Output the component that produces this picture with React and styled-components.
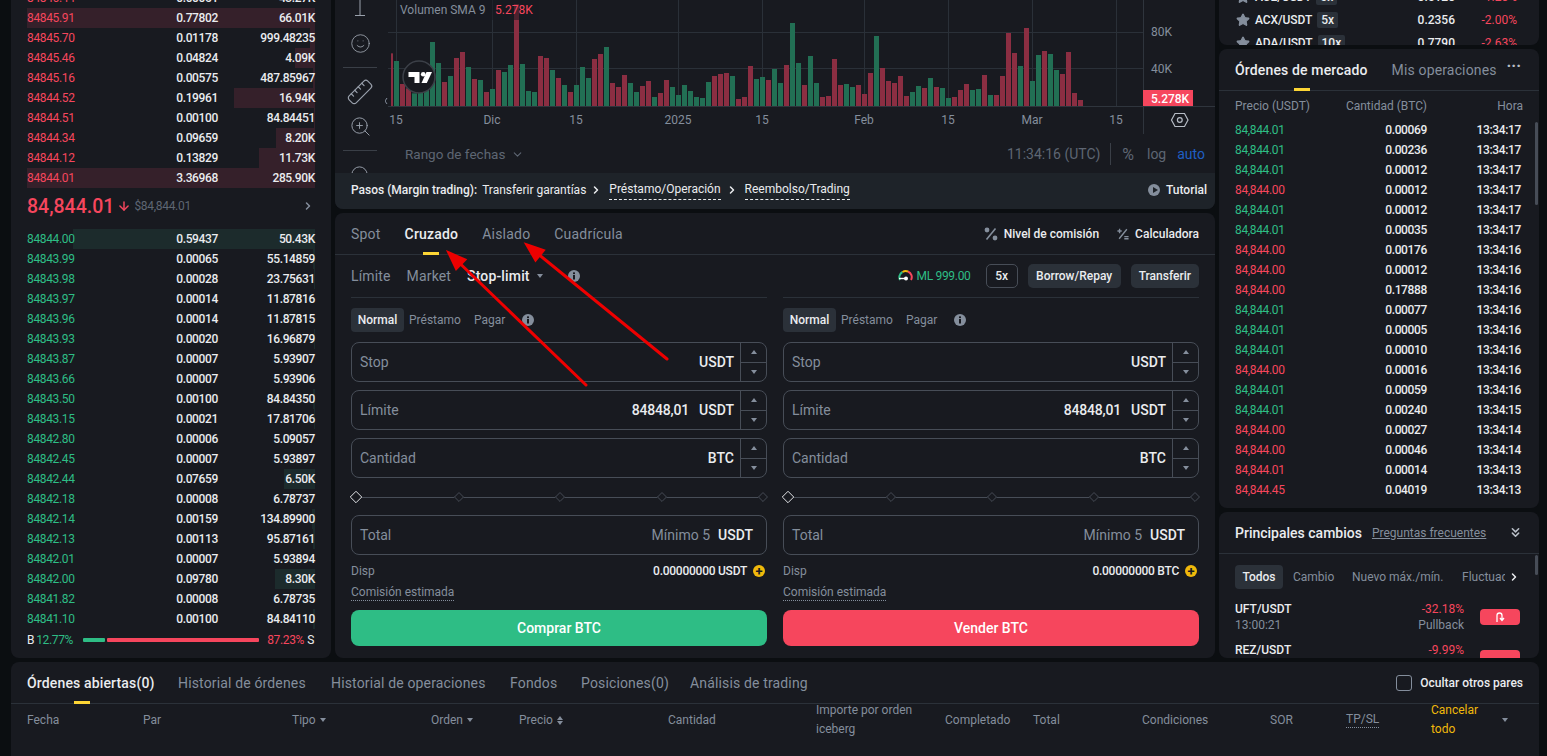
import React from 'react';
import styled, { createGlobalStyle } from 'styled-components';
import { Smile, Ruler, ZoomIn, ZoomOut, ChevronDown, ChevronRight, ChevronsDown, Star, ArrowDown } from 'lucide-react';

const GREEN = '#2ebd85';
const RED = '#f6465d';
const GRAY = '#848e9c';
const WHITE = '#eaecef';
const LINE = '#2b3139';
const PANEL = '#181a20';

const ASKS = [
  ['84846.44', '0.00051', '43.27K', 0],
  ['84845.91', '0.77802', '66.01K', 288],
  ['84845.70', '0.01178', '999.48235', 5],
  ['84845.46', '0.04824', '4.09K', 20],
  ['84845.16', '0.00575', '487.85967', 2],
  ['84844.52', '0.19961', '16.94K', 81],
  ['84844.51', '0.00100', '84.84451', 1],
  ['84844.34', '0.09659', '8.20K', 39],
  ['84844.12', '0.13829', '11.73K', 56],
  ['84844.01', '3.36968', '285.90K', 288],
];

const BIDS = [
  ['84844.00', '0.59437', '50.43K', 242],
  ['84843.99', '0.00065', '55.14859', 2],
  ['84843.98', '0.00028', '23.75631', 1],
  ['84843.97', '0.00014', '11.87816', 0],
  ['84843.96', '0.00014', '11.87815', 0],
  ['84843.93', '0.00020', '16.96879', 1],
  ['84843.87', '0.00007', '5.93907', 0],
  ['84843.66', '0.00007', '5.93906', 0],
  ['84843.50', '0.00100', '84.84350', 2],
  ['84843.15', '0.00021', '17.81706', 1],
  ['84842.80', '0.00006', '5.09057', 0],
  ['84842.45', '0.00007', '5.93897', 0],
  ['84842.44', '0.07659', '6.50K', 31],
  ['84842.18', '0.00008', '6.78737', 0],
  ['84842.14', '0.00159', '134.89900', 3],
  ['84842.13', '0.00113', '95.87161', 2],
  ['84842.01', '0.00007', '5.93894', 0],
  ['84842.00', '0.09780', '8.30K', 40],
  ['84841.82', '0.00008', '6.78735', 0],
  ['84841.10', '0.00100', '84.84110', 2],
];

const TRADES = [
  ['84,844.01', '0.00069', '13:34:17', 'g'],
  ['84,844.01', '0.00236', '13:34:17', 'g'],
  ['84,844.01', '0.00012', '13:34:17', 'g'],
  ['84,844.00', '0.00012', '13:34:17', 'r'],
  ['84,844.01', '0.00012', '13:34:17', 'g'],
  ['84,844.01', '0.00035', '13:34:17', 'g'],
  ['84,844.00', '0.00176', '13:34:16', 'r'],
  ['84,844.00', '0.00012', '13:34:16', 'r'],
  ['84,844.00', '0.17888', '13:34:16', 'r'],
  ['84,844.01', '0.00077', '13:34:16', 'g'],
  ['84,844.01', '0.00005', '13:34:16', 'g'],
  ['84,844.01', '0.00010', '13:34:16', 'g'],
  ['84,844.00', '0.00016', '13:34:16', 'r'],
  ['84,844.01', '0.00059', '13:34:16', 'g'],
  ['84,844.01', '0.00240', '13:34:15', 'g'],
  ['84,844.00', '0.00027', '13:34:14', 'r'],
  ['84,844.00', '0.00046', '13:34:14', 'r'],
  ['84,844.01', '0.00014', '13:34:13', 'r'],
  ['84,844.45', '0.04019', '13:34:13', 'r'],
];

// colour + top of the bar, measured at 3x from a baseline of 318
const BARS = 'r160 g183 r252 r265 g280 g270 g250 g126 g189 r246 g228 r174 r156 g201 r237 g240 r276 g267 r210 g216 g195 r12 g192 g273 g276 r168 r174 g210 r234 g255 r276 g255 g201 g234 r177 r162 g141 r249 r261 r225 g249 g276 r258 r243 g291 r279 r240 g261 g285 g255 g273 g291 g294 g246 r228 r222 r219 g228 r297 r291 r198 g237 g231 r240 g207 g249 r195 g69 g189 r255 g168 g249 r291 r288 r177 r255 g252 g261 r255 r282 r219 g108 r204 r243 r249 r228 r288 g276 g258 r264 g234 r261 g264 g294 r291 r270 r252 g270 g267 r225 g285 r285 r228 r99 r159 g198 r84 g243 g165 r153 g162 g210 r222 r156 r279 r300'.split(' ');

const TIME_LABELS = [
  [396, '15'], [492, 'Dic'], [576, '15'], [678, '2025'], [762, '15'],
  [864, 'Feb'], [948, '15'], [1032, 'Mar'], [1116, '15'],
];

const COLUMNS = [
  ['Fecha', 116], ['Par', 149], ['Tipo', 139, 'caret'], ['Orden', 88, 'caret'], ['Precio', 149, 'sort'],
  ['Cantidad', 148], ['Importe por orden iceberg', 129], ['Completado', 88], ['Total', 109],
  ['Condiciones', 128], ['SOR', 76], ['TP/SL', 85, 'dotted'],
];

const FORMS = [
  { limit: '84848,01', asset: 'BTC', balance: '0.00000000 USDT', action: 'Comprar BTC', $buy: true },
  { limit: '84848,01', asset: 'BTC', balance: '0.00000000 BTC', action: 'Vender BTC', $buy: false },
];

function VolumeChart() {
  return (
    <ChartSvg viewBox="385 0 830 134">
      {[32.5, 68.5].map((y) => <line key={y} x1="388" x2="1143" y1={y} y2={y} stroke="#2a3038" />)}
      {TIME_LABELS.map(([x]) => <line key={x} x1={x + 0.5} x2={x + 0.5} y1="0" y2="106" stroke="#2a3038" />)}
      {BARS.map((bar, i) => {
        const top = Number(bar.slice(1)) / 3;
        const fill = bar[0] === 'g' ? '#226f54' : '#8b2e42';
        if (i === 0) return <rect key={i} x="391" y={top} width="2" height={106 - top} fill={fill} />;
        return <rect key={i} x={388 + i * 6} y={top} width="5" height={106 - top} fill={fill} />;
      })}
      <rect x="397" y="0" width="142" height="20" fill={PANEL} opacity="0.55" />
      <text x="400" y="14" fontSize="12" fill={GRAY}>Volumen SMA 9</text>
      <text x="495" y="14" fontSize="12" fill={RED}>5.278K</text>

      <circle cx="419" cy="77" r="16" fill={PANEL} stroke="#3c4048" strokeWidth="1.5" />
      <path d="M408.5 72h11v11h-5v-6h-6z" fill="#fff" />
      <circle cx="423.2" cy="74.3" r="2.3" fill="#fff" />
      <path d="M426.5 72h5.5l-5.2 11h-5.3z" fill="#fff" />
      <path d="M387 98l-2 3 2 3" stroke={GRAY} fill="none" />

      <line x1="388" x2="1215" y1="106.5" y2="106.5" stroke="#2f353d" />
      <line x1="1143.5" x2="1143.5" y1="0" y2="134" stroke="#2f353d" />
      <text x="1151" y="36" fontSize="12" fill={GRAY}>80K</text>
      <text x="1151" y="73" fontSize="12" fill={GRAY}>40K</text>
      <rect x="1143" y="90" width="50" height="16" fill={RED} />
      <text x="1151" y="103" fontSize="12" fontWeight="500" fill="#fff">5.278K</text>
      {TIME_LABELS.map(([x, label]) => (
        <text key={label + x} x={x} y="124" fontSize="12" fill={GRAY} textAnchor="middle">{label}</text>
      ))}
      <path d="M1175 113.5h9.5l3.5 6.5-3.5 6.5h-9.5l-3.5-6.5z" fill="none" stroke="#b7bdc6" strokeWidth="1.2" />
      <circle cx="1179.8" cy="120" r="2.4" fill="none" stroke="#b7bdc6" strokeWidth="1.2" />
    </ChartSvg>
  );
}

function InfoIcon() {
  return (
    <svg width="12" height="12" viewBox="0 0 12 12">
      <circle cx="6" cy="6" r="6" fill={GRAY} />
      <rect x="5" y="5" width="2" height="4.5" fill={PANEL} />
      <rect x="5" y="2.4" width="2" height="1.7" fill={PANEL} />
    </svg>
  );
}

function FeeIcon() {
  return (
    <svg width="14" height="14" viewBox="0 0 14 14">
      <path d="M11.5 1.5L2.5 12.5" stroke={GRAY} strokeWidth="1.6" />
      <circle cx="3" cy="3" r="2.4" fill={GRAY} />
      <circle cx="11" cy="11" r="2.4" fill={GRAY} />
    </svg>
  );
}

function CalcIcon() {
  return (
    <svg width="12" height="12" viewBox="0 0 14 14" stroke={GRAY} strokeWidth="1.6">
      <path d="M11.5 1.5L2.5 12.5M0.5 3.5h5M3 1v5M8.5 10h5M8.5 12.5h5" />
    </svg>
  );
}

function Gauge() {
  return (
    <svg width="15" height="14" viewBox="0 0 15 14" fill="none" strokeWidth="2">
      <path d="M2 11A6 6 0 0 1 4.5 3" stroke={GREEN} />
      <path d="M4.5 3A6 6 0 0 1 10 2.5" stroke="#f0b90b" />
      <path d="M10 2.5A6 6 0 0 1 13 11" stroke={RED} />
      <circle cx="8" cy="9.5" r="2" fill="#fff" stroke="none" />
      <path d="M1 9.5h6" stroke="#fff" strokeWidth="1.4" />
    </svg>
  );
}

function OrderRow({ row, color, depthColor }) {
  return (
    <BookRow $depth={row[3]} $depthColor={depthColor}>
      <BookPrice $color={color}>{row[0]}</BookPrice>
      <BookNum>{row[1]}</BookNum>
      <BookNum>{row[2]}</BookNum>
    </BookRow>
  );
}

function OrderBook() {
  return (
    <BookPanel>
      {ASKS.map((r) => <OrderRow key={r[0]} row={r} color={RED} depthColor="#35202a" />)}
      <MidRow>
        <MidPrice>84,844.01</MidPrice>
        <ArrowDown size={14} color={RED} strokeWidth={2.5} />
        <MidFiat>$84,844.01</MidFiat>
        <ChevronRight size={12} color={GRAY} strokeWidth={3} />
      </MidRow>
      {BIDS.map((r) => <OrderRow key={r[0]} row={r} color={GREEN} depthColor="#1c2b2c" />)}
      <RatioRow>
        <BookLabel>B</BookLabel>
        <Pct $color={GREEN}>12.77%</Pct>
        <RatioBar $width={22} $left={7} $right={2} $color={GREEN} />
        <RatioBar $width={152} $right={6} $color={RED} />
        <Pct $color={RED}>87.23%</Pct>
        <BookLabel>S</BookLabel>
      </RatioRow>
    </BookPanel>
  );
}

function ChartCard() {
  return (
    <ChartPanel>
      <ChartBody>
        <Toolbar>
          <TextTool viewBox="0 0 14 16" width="14" height="16">
            <path d="M7 0v15M2 15.5h10" stroke="#9aa1ac" fill="none" />
          </TextTool>
          <ToolSlot $top={10}><Smile size={21} strokeWidth={1} /></ToolSlot>
          <ToolRule />
          <ToolSlot $flip><Ruler size={28} strokeWidth={1} /></ToolSlot>
          <ToolSlot><ZoomIn size={23} strokeWidth={1} /></ToolSlot>
          <ToolRule />
          <ToolSlot><ZoomOut size={23} strokeWidth={1} /></ToolSlot>
        </Toolbar>
        <ChartMain>
          <VolumeChart />
          <RangeBar>
            <RangeLabel $size={13.5} $right={6}>Rango de fechas</RangeLabel>
            <ChevronDown size={13} color="#5e6673" />
            <RangeSpacer />
            <RangeLabel $right={10}>11:34:16 (UTC)</RangeLabel>
            <RangeDivider />
            <RangeLabel $size={16} $right={13}>%</RangeLabel>
            <RangeLabel $right={11}>log</RangeLabel>
            <RangeLabel $color="#1f5fc4" $right={0}>auto</RangeLabel>
          </RangeBar>
        </ChartMain>
      </ChartBody>
      <StepsBar>
        <StepTitle>Pasos (Margin trading):</StepTitle>
        <StepText>Transferir garantías</StepText>
        <ChevronRight size={12} color={WHITE} strokeWidth={3} />
        <StepLink>Préstamo/Operación</StepLink>
        <ChevronRight size={12} color={WHITE} strokeWidth={3} />
        <StepLink>Reembolso/Trading</StepLink>
        <StepSpacer />
        <TutorialDot />
        <StepTutorial>Tutorial</StepTutorial>
      </StepsBar>
    </ChartPanel>
  );
}

function Stepper() {
  return (
    <StepperBox>
      <StepperCell><Caret $up /></StepperCell>
      <StepperCell><Caret /></StepperCell>
    </StepperBox>
  );
}

function OrderForm({ form }) {
  return (
    <FormCol>
      <ModeRow>
        <ModePill>Normal</ModePill>
        <ModeTab $width={65}>Préstamo</ModeTab>
        <ModeTab $width={48}>Pagar</ModeTab>
        <InfoIcon />
      </ModeRow>
      <FieldBox $top={10}>
        <FieldLabel>Stop</FieldLabel>
        <FieldUnit>USDT</FieldUnit>
        <Stepper />
      </FieldBox>
      <FieldBox $top={8}>
        <FieldLabel>Límite</FieldLabel>
        <FieldValue>{form.limit}</FieldValue>
        <FieldUnit>USDT</FieldUnit>
        <Stepper />
      </FieldBox>
      <FieldBox $top={8}>
        <FieldLabel>Cantidad</FieldLabel>
        <FieldUnit>{form.asset}</FieldUnit>
        <Stepper />
      </FieldBox>
      <Slider>
        <SliderMark $active />
        <SliderMark />
        <SliderMark />
        <SliderMark />
        <SliderMark />
      </Slider>
      <FieldBox $top={10} $pad={13}>
        <FieldLabel>Total</FieldLabel>
        <FieldHint>Mínimo 5</FieldHint>
        <FieldUnit>USDT</FieldUnit>
      </FieldBox>
      <BalanceRow>
        <MutedText>Disp</MutedText>
        <BalanceValue>{form.balance}</BalanceValue>
        <PlusDot>+</PlusDot>
      </BalanceRow>
      <FeeRow>Comisión estimada</FeeRow>
      <ActionButton $buy={form.$buy}>{form.action}</ActionButton>
    </FormCol>
  );
}

function TradeCard() {
  return (
    <TradePanel>
      <TabsRow>
        <MarginTab $left={16}>Spot</MarginTab>
        <MarginTab $left={24} $active>Cruzado</MarginTab>
        <MarginTab $left={24}>Aislado</MarginTab>
        <MarginTab $left={24}>Cuadrícula</MarginTab>
        <RowSpacer />
        <LinkItem><FeeIcon />Nivel de comisión</LinkItem>
        <LinkItem><CalcIcon />Calculadora</LinkItem>
      </TabsRow>
      <TypeRow>
        <TypeTab>Límite</TypeTab>
        <TypeTab>Market</TypeTab>
        <TypeTab $active>Stop-limit</TypeTab>
        <SmallCaret />
        <InfoSlot><InfoIcon /></InfoSlot>
        <RowSpacer />
        <Gauge />
        <MarginLevel>ML 999.00</MarginLevel>
        <OutlineBtn>5x</OutlineBtn>
        <SolidBtn>Borrow/Repay</SolidBtn>
        <SolidBtn>Transferir</SolidBtn>
      </TypeRow>
      <FormGrid>
        {FORMS.map((f) => <OrderForm key={f.action} form={f} />)}
      </FormGrid>
    </TradePanel>
  );
}

function PairRow({ pair, lev, price, change }) {
  return (
    <PairLine>
      <Star size={14} color={GRAY} fill={GRAY} />
      <PairName>{pair}</PairName>
      <Leverage>{lev}</Leverage>
      <PairPrice>{price}</PairPrice>
      <PairChange>{change}</PairChange>
    </PairLine>
  );
}

function RightColumn() {
  return (
    <Column>
      <PairsPanel>
        <PairRow pair="ACE/USDT" lev="5x" price="0.5120" change="-1.20%" />
        <PairRow pair="ACX/USDT" lev="5x" price="0.2356" change="-2.00%" />
        <PairRow pair="ADA/USDT" lev="10x" price="0.7790" change="-2.63%" />
      </PairsPanel>
      <TradesPanel>
        <TradesHead>
          <TradesTab $active>Órdenes de mercado</TradesTab>
          <TradesTab>Mis operaciones</TradesTab>
          <Dots>···</Dots>
        </TradesHead>
        <TradesCols>
          <span>Precio (USDT)</span>
          <span>Cantidad (BTC)</span>
          <span>Hora</span>
        </TradesCols>
        {TRADES.map((t, i) => (
          <TradeLine key={i}>
            <BookPrice $color={t[3] === 'g' ? GREEN : RED}>{t[0]}</BookPrice>
            <BookNum>{t[1]}</BookNum>
            <BookNum>{t[2]}</BookNum>
          </TradeLine>
        ))}
        <ScrollThumb $top={73} $height={83} />
      </TradesPanel>
      <MoversPanel>
        <MoversHead>
          <MoversTitle>Principales cambios</MoversTitle>
          <FaqLink>Preguntas frecuentes</FaqLink>
          <RowSpacer />
          <ChevronsDown size={15} color="#b7bdc6" strokeWidth={2.5} />
        </MoversHead>
        <MoversTabs>
          <MoversPill>Todos</MoversPill>
          <MoversTab $width={59}>Cambio</MoversTab>
          <MoversTab $width={110}>Nuevo máx./mín.</MoversTab>
          <MoversTab $width={43} $clip>Fluctuaciones</MoversTab>
          <ChevronRight size={12} color={WHITE} strokeWidth={3} />
        </MoversTabs>
        <MoverRow>
          <div>
            <MoverPair>UFT/USDT</MoverPair>
            <MoverSub>13:00:21</MoverSub>
          </div>
          <MoverRight>
            <MoverChange>-32.18%</MoverChange>
            <MoverSub>Pullback</MoverSub>
          </MoverRight>
          <MoverBadge>
            <svg width="10" height="10" viewBox="0 0 10 10" fill="none" stroke="#fff" strokeWidth="1.3">
              <path d="M2 10V3.5a2.5 2.5 0 0 1 5 0V8M5 6l2 2.5L9 6" />
            </svg>
          </MoverBadge>
        </MoverRow>
        <MoverRow>
          <div>
            <MoverPair>REZ/USDT</MoverPair>
            <MoverSub>13:00:10</MoverSub>
          </div>
          <MoverRight>
            <MoverChange>-9.99%</MoverChange>
            <MoverSub>Pullback</MoverSub>
          </MoverRight>
          <MoverBadge />
        </MoverRow>
        <ScrollThumb $top={43} $height={20} />
      </MoversPanel>
    </Column>
  );
}

function OrdersCard() {
  return (
    <OrdersPanel>
      <OrdersTabs>
        <OrdersTab $active $width={151}>Órdenes abiertas(0)</OrdersTab>
        <OrdersTab $width={153}>Historial de órdenes</OrdersTab>
        <OrdersTab $width={179}>Historial de operaciones</OrdersTab>
        <OrdersTab $width={71}>Fondos</OrdersTab>
        <OrdersTab $width={109}>Posiciones(0)</OrdersTab>
        <OrdersTab>Análisis de trading</OrdersTab>
        <RowSpacer />
        <CheckBox />
        <HideLabel>Ocultar otros pares</HideLabel>
      </OrdersTabs>
      <OrdersCols>
        {COLUMNS.map(([label, width, extra]) => (
          <OrdersCol key={label} $width={width}>
            <ColText $dotted={extra === 'dotted'}>{label}</ColText>
            {extra === 'caret' && <SmallCaret />}
            {extra === 'sort' && (
              <SortBox>
                <Caret $up />
                <Caret />
              </SortBox>
            )}
          </OrdersCol>
        ))}
        <CancelAll>Cancelar todo</CancelAll>
        <SmallCaret />
      </OrdersCols>
    </OrdersPanel>
  );
}

export default function App() {
  return (
    <Page>
      <GlobalStyle />
      <Column><OrderBook /></Column>
      <Column>
        <ChartCard />
        <TradeCard />
      </Column>
      <RightColumn />
      <OrdersCard />
      <ArrowOverlay viewBox="0 0 1547 756">
        <line x1="586" y1="385" x2="460.5" y2="264" />
        <polygon points="449,253 464.7,259.8 456.3,268.4" />
        <line x1="667" y1="359" x2="539.4" y2="255" />
        <polygon points="527,245 543.2,250.5 535.6,259.8" />
      </ArrowOverlay>
    </Page>
  );
}

const GlobalStyle = createGlobalStyle`
  html, body {
    margin: 0;
    padding: 0;
    background: #0b0e11;
  }
  * {
    box-sizing: border-box;
  }
  body {
    font-family: Roboto, "Liberation Sans", sans-serif;
    color: ${WHITE};
  }
`;

const Page = styled.div`
  position: relative;
  width: 1547px;
  height: 756px;
  overflow: hidden;
  display: grid;
  grid-template-columns: 320px 880px 320px;
  grid-template-rows: 658px 94px;
  gap: 4px;
  padding-left: 11px;
`;

const Column = styled.div`
  display: flex;
  flex-direction: column;
  justify-content: flex-end;
  gap: 4px;
  height: 658px;
  overflow: hidden;
`;

const Panel = styled.div`
  position: relative;
  background: ${PANEL};
  border-radius: 8px;
  overflow: hidden;
  flex: none;
`;

const BookPanel = styled(Panel)`
  padding: 0 16px 7px;
  border-radius: 0 0 8px 8px;
`;

const BookRow = styled.div`
  display: grid;
  grid-template-columns: 96px 95px 97px;
  height: 20px;
  align-items: center;
  background: linear-gradient(
    to left,
    ${(p) => p.$depthColor} ${(p) => p.$depth}px,
    transparent ${(p) => p.$depth}px
  );
`;

const BookPrice = styled.span`
  font-size: 12px;
  letter-spacing: -0.35px;
  color: ${(p) => p.$color};
`;

const BookNum = styled.span`
  font-size: 12px;
  letter-spacing: -0.35px;
  font-weight: 500;
  text-align: right;
  color: ${WHITE};
`;

const MidRow = styled.div`
  display: flex;
  align-items: center;
  height: 41px;
  padding: 0 1px 5px 0;
`;

const MidPrice = styled.span`
  font-size: 19.5px;
  font-weight: 500;
  color: ${RED};
  margin-right: 3px;
`;

const MidFiat = styled.span`
  font-size: 12px;
  letter-spacing: -0.3px;
  color: #5e6673;
  margin: 0 auto 0 3px;
`;

const RatioRow = styled.div`
  display: flex;
  align-items: center;
  height: 22px;
  font-size: 12px;
  letter-spacing: -0.35px;
`;

const BookLabel = styled.span`
  color: ${WHITE};
`;

const Pct = styled.span`
  color: ${(p) => p.$color};
  margin: 0 2px;
  width: 38px;
`;

const RatioBar = styled.div`
  width: ${(p) => p.$width}px;
  height: 4px;
  margin: 0 ${(p) => p.$right}px 0 ${(p) => p.$left || 0}px;
  border-radius: 1px;
  background: ${(p) => p.$color};
`;

const ChartPanel = styled(Panel)`
  height: 209px;
  border-radius: 0 0 8px 8px;
`;

const ChartBody = styled.div`
  display: flex;
  height: 173px;
  overflow: hidden;
`;

const Toolbar = styled.div`
  width: 50px;
  flex: none;
  display: flex;
  flex-direction: column;
  align-items: center;
  color: #9aa1ac;
`;

const TextTool = styled.svg`
  flex: none;
`;

const ToolSlot = styled.div`
  height: 34px;
  flex: none;
  display: flex;
  align-items: center;
  justify-content: center;
  margin-top: ${(p) => p.$top || 0}px;
  svg {
    transform: ${(p) => (p.$flip ? 'scaleX(-1)' : 'none')};
  }
`;

const ToolRule = styled.div`
  width: 34px;
  height: 1px;
  flex: none;
  background: #3a3f47;
  margin: 7px 0 7px;
`;

const ChartMain = styled.div`
  flex: 1;
  display: flex;
  flex-direction: column;
`;

const ChartSvg = styled.svg`
  display: block;
  width: 830px;
  height: 134px;
  flex: none;
  font-family: Roboto, sans-serif;
`;

const RangeBar = styled.div`
  height: 39px;
  display: flex;
  align-items: center;
  padding: 1px 10px 0 20px;
`;

const RangeLabel = styled.span`
  font-size: ${(p) => p.$size || 14}px;
  color: ${(p) => p.$color || '#5e6673'};
  margin-right: ${(p) => p.$right}px;
`;

const RangeSpacer = styled.div`
  flex: 1;
`;

const RangeDivider = styled.div`
  width: 1px;
  height: 22px;
  background: #3a3f47;
  margin-right: 11px;
`;

const StepsBar = styled.div`
  height: 36px;
  background: #1e2329;
  display: flex;
  align-items: center;
  padding: 0 8px 2px 16px;
  font-size: 12px;
  color: ${WHITE};
`;

const StepTitle = styled.span`
  font-weight: 500;
  margin-right: 5px;
`;

const StepText = styled.span`
  margin-right: 4px;
`;

const StepLink = styled.span`
  padding: 2px 0 3px;
  margin: 0 5px 0 7px;
  border-bottom: 1px dashed ${WHITE};
`;

const StepSpacer = styled.div`
  flex: 1;
`;

const TutorialDot = styled.i`
  width: 12px;
  height: 12px;
  border-radius: 50%;
  background: ${GRAY};
  margin-right: 6px;
  position: relative;
  &:after {
    content: '';
    position: absolute;
    left: 4.5px;
    top: 3px;
    border-left: 5px solid #1e2329;
    border-top: 3px solid transparent;
    border-bottom: 3px solid transparent;
  }
`;

const StepTutorial = styled.span`
  font-weight: 500;
`;

const TradePanel = styled(Panel)`
  height: 445px;
`;

const TabsRow = styled.div`
  display: flex;
  align-items: center;
  height: 42px;
  padding-right: 16px;
  border-bottom: 1px solid ${LINE};
`;

const MarginTab = styled.span`
  position: relative;
  margin-left: ${(p) => p.$left}px;
  font-size: 14px;
  letter-spacing: 0.2px;
  font-weight: ${(p) => (p.$active ? 500 : 400)};
  color: ${(p) => (p.$active ? WHITE : GRAY)};
  ${(p) => p.$active && `
    &:after {
      content: '';
      position: absolute;
      left: 18px;
      bottom: -13px;
      width: 16px;
      height: 3px;
      background: #fcd535;
    }
  `}
`;

const RowSpacer = styled.div`
  flex: 1;
`;

const LinkItem = styled.span`
  display: flex;
  align-items: center;
  gap: 6px;
  margin-left: 18px;
  font-size: 12px;
  font-weight: 500;
  color: ${WHITE};
`;

const TypeRow = styled.div`
  display: flex;
  align-items: center;
  height: 42px;
  padding: 0 16px;
`;

const TypeTab = styled.span`
  margin-right: 16px;
  font-size: 14px;
  letter-spacing: 0.15px;
  font-weight: ${(p) => (p.$active ? 500 : 400)};
  color: ${(p) => (p.$active ? WHITE : GRAY)};
  &:nth-child(3) {
    margin-right: 7px;
  }
`;

const SmallCaret = styled.i`
  display: inline-block;
  border-left: 3.5px solid transparent;
  border-right: 3.5px solid transparent;
  border-top: 4px solid ${GRAY};
`;

const InfoSlot = styled.span`
  display: flex;
  margin-left: 25px;
`;

const MarginLevel = styled.span`
  margin: 0 15px 0 3px;
  font-size: 12px;
  letter-spacing: -0.3px;
  color: ${GREEN};
`;

const OutlineBtn = styled.span`
  width: 32px;
  height: 24px;
  margin-right: 10px;
  display: flex;
  align-items: center;
  justify-content: center;
  border: 1px solid #474d57;
  border-radius: 5px;
  font-size: 12px;
  font-weight: 500;
`;

const SolidBtn = styled.span`
  height: 24px;
  padding: 0 8.5px;
  margin-right: 10px;
  display: flex;
  align-items: center;
  background: #2b3139;
  border-radius: 5px;
  font-size: 12px;
  font-weight: 500;
  &:last-child {
    margin-right: 0;
    padding: 0 8px;
  }
`;

const FormGrid = styled.div`
  display: grid;
  grid-template-columns: 416px 416px;
  gap: 16px;
  padding: 0 16px;
`;

const FormCol = styled.div`
  border-top: 1px solid ${LINE};
  padding-top: 10px;
`;

const ModeRow = styled.div`
  display: flex;
  align-items: center;
  height: 24px;
`;

const ModePill = styled.span`
  width: 53px;
  height: 24px;
  margin-right: 5px;
  display: flex;
  align-items: center;
  justify-content: center;
  background: #2b3139;
  border-radius: 4px;
  font-size: 12px;
  font-weight: 500;
`;

const ModeTab = styled.span`
  width: ${(p) => p.$width}px;
  font-size: 12px;
  color: ${GRAY};
`;

const FieldBox = styled.div`
  display: flex;
  align-items: center;
  height: 40px;
  margin-top: ${(p) => p.$top}px;
  padding: 0 ${(p) => p.$pad || 0}px 0 8px;
  border: 1px solid #474d57;
  border-radius: 8px;
`;

const FieldLabel = styled.span`
  flex: 1;
  margin-bottom: 1px;
  font-size: 14px;
  color: ${GRAY};
`;

const FieldValue = styled.span`
  margin: 0 10px 1px 0;
  font-size: 14px;
  letter-spacing: -0.2px;
  font-weight: 500;
`;

const FieldHint = styled.span`
  margin: 0 8px 1px 0;
  font-size: 14px;
  color: ${GRAY};
`;

const FieldUnit = styled.span`
  margin-bottom: 1px;
  font-size: 14px;
  font-weight: 500;
`;

const StepperBox = styled.div`
  width: 26px;
  height: 38px;
  margin-left: 6px;
  border-left: 1px solid #474d57;
  display: flex;
  flex-direction: column;
`;

const StepperCell = styled.div`
  flex: 1;
  display: flex;
  align-items: center;
  justify-content: center;
  &:first-child {
    border-bottom: 1px solid #474d57;
  }
`;

const Caret = styled.i`
  display: block;
  border-left: 3.5px solid transparent;
  border-right: 3.5px solid transparent;
  ${(p) => (p.$up ? 'border-bottom' : 'border-top')}: 4px solid ${GRAY};
`;

const Slider = styled.div`
  display: flex;
  align-items: center;
  justify-content: space-between;
  height: 16px;
  margin-top: 11px;
  background: linear-gradient(#474d57, #474d57) center / 100% 1px no-repeat;
`;

const SliderMark = styled.i`
  width: ${(p) => (p.$active ? 10 : 8)}px;
  height: ${(p) => (p.$active ? 10 : 8)}px;
  transform: rotate(45deg) scale(0.9);
  background: ${PANEL};
  border: ${(p) => (p.$active ? `1.5px solid ${WHITE}` : '1px solid #474d57')};
`;

const BalanceRow = styled.div`
  display: flex;
  align-items: center;
  height: 16px;
  margin-top: 8px;
`;

const MutedText = styled.span`
  flex: 1;
  font-size: 12px;
  color: ${GRAY};
`;

const BalanceValue = styled.span`
  font-size: 12px;
  letter-spacing: -0.25px;
  font-weight: 500;
`;

const PlusDot = styled.span`
  width: 12px;
  height: 12px;
  margin: 0 2px 0 6px;
  display: flex;
  align-items: center;
  justify-content: center;
  border-radius: 50%;
  background: #f0b90b;
  color: ${PANEL};
  font-size: 13px;
  font-weight: 700;
  line-height: 1;
`;

const FeeRow = styled.div`
  width: max-content;
  height: 16px;
  margin-top: 6px;
  font-size: 12px;
  line-height: 15px;
  color: ${GRAY};
  border-bottom: 1px dotted ${GRAY};
`;

const ActionButton = styled.div`
  height: 36px;
  margin-top: 9px;
  display: flex;
  align-items: center;
  justify-content: center;
  border-radius: 8px;
  font-size: 14px;
  font-weight: 500;
  color: #fff;
  background: ${(p) => (p.$buy ? GREEN : RED)};
`;

const PairsPanel = styled(Panel)`
  height: 45px;
  padding: 0 16px;
  border-radius: 0 0 8px 8px;
`;

const PairLine = styled.div`
  display: flex;
  align-items: center;
  height: 23px;
  padding-left: 1px;
  font-size: 12px;
  &:first-child {
    margin-top: -15px;
  }
`;

const PairName = styled.span`
  margin-left: 5px;
  letter-spacing: -0.1px;
  font-weight: 500;
`;

const Leverage = styled.span`
  height: 16px;
  margin-left: 5px;
  padding: 0 4px;
  display: flex;
  align-items: center;
  background: #2b3139;
  border-radius: 2px;
  font-weight: 500;
`;

const PairPrice = styled.span`
  margin-left: auto;
  font-weight: 500;
`;

const PairChange = styled.span`
  width: 68px;
  padding-right: 6px;
  text-align: right;
  color: ${RED};
`;

const TradesPanel = styled(Panel)`
  height: 459px;
`;

const TradesHead = styled.div`
  display: flex;
  align-items: center;
  height: 42px;
  padding: 0 18px 0 16px;
  border-bottom: 1px solid ${LINE};
`;

const TradesTab = styled.span`
  position: relative;
  flex: none;
  margin-right: ${(p) => (p.$active ? 24 : 0)}px;
  white-space: nowrap;
  font-size: 14px;
  letter-spacing: 0.15px;
  font-weight: ${(p) => (p.$active ? 500 : 400)};
  color: ${(p) => (p.$active ? WHITE : GRAY)};
  ${(p) => p.$active && `
    &:after {
      content: '';
      position: absolute;
      left: 59px;
      bottom: -13px;
      width: 16px;
      height: 3px;
      background: #fcd535;
    }
  `}
`;

const Dots = styled.span`
  margin: -8px 0 0 auto;
  font-size: 16px;
  font-weight: 700;
  color: #b7bdc6;
`;

const TradesCols = styled.div`
  display: grid;
  grid-template-columns: 100px 92px 96px;
  align-items: center;
  height: 29px;
  margin: 0 16px;
  font-size: 12px;
  color: ${GRAY};
  span:nth-child(n + 2) {
    text-align: right;
  }
`;

const TradeLine = styled.div`
  display: grid;
  grid-template-columns: 100px 92px 94px;
  align-items: center;
  height: 20px;
  margin: 0 16px;
`;

const ScrollThumb = styled.div`
  position: absolute;
  top: ${(p) => p.$top}px;
  right: 1px;
  width: 3px;
  height: ${(p) => p.$height}px;
  border-radius: 2px;
  background: #474d57;
`;

const MoversPanel = styled(Panel)`
  height: 146px;
`;

const MoversHead = styled.div`
  display: flex;
  align-items: center;
  height: 42px;
  padding: 0 16px;
  border-bottom: 1px solid ${LINE};
`;

const MoversTitle = styled.span`
  font-size: 14px;
  font-weight: 500;
`;

const FaqLink = styled.span`
  margin-left: 10px;
  font-size: 12px;
  color: ${GRAY};
  text-decoration: underline;
`;

const MoversTabs = styled.div`
  display: flex;
  align-items: center;
  height: 24px;
  margin: 11px 16px 7px;
  font-size: 12px;
`;

const MoversPill = styled.span`
  width: 48px;
  height: 24px;
  margin-right: 10px;
  display: flex;
  align-items: center;
  justify-content: center;
  background: #2b3139;
  border-radius: 4px;
  font-weight: 500;
`;

const MoversTab = styled.span`
  width: ${(p) => p.$width}px;
  color: ${GRAY};
  white-space: nowrap;
  overflow: hidden;
  ${(p) => p.$clip && 'margin-right: 3px;'}
`;

const MoverRow = styled.div`
  display: flex;
  align-items: center;
  height: 41px;
  margin: 0 16px;
`;

const MoverPair = styled.div`
  font-size: 12px;
  font-weight: 500;
  line-height: 16px;
`;

const MoverSub = styled.div`
  font-size: 12px;
  line-height: 16px;
  color: ${GRAY};
`;

const MoverRight = styled.div`
  margin-left: auto;
  text-align: right;
`;

const MoverChange = styled.div`
  font-size: 12px;
  line-height: 16px;
  color: ${RED};
`;

const MoverBadge = styled.div`
  width: 40px;
  height: 16px;
  margin: 1px 3px 0 16px;
  display: flex;
  align-items: center;
  justify-content: center;
  background: ${RED};
  border-radius: 4px;
`;

const OrdersPanel = styled(Panel)`
  grid-column: 1 / -1;
  height: 100px;
  border-radius: 8px 8px 0 0;
`;

const OrdersTabs = styled.div`
  display: flex;
  align-items: center;
  height: 42px;
  padding: 1px 16px 0;
  border-bottom: 1px solid ${LINE};
`;

const OrdersTab = styled.span`
  position: relative;
  width: ${(p) => (p.$width ? `${p.$width}px` : 'auto')};
  font-size: 14px;
  letter-spacing: 0.15px;
  font-weight: ${(p) => (p.$active ? 500 : 400)};
  color: ${(p) => (p.$active ? WHITE : GRAY)};
  ${(p) => p.$active && `
    &:after {
      content: '';
      position: absolute;
      left: 47px;
      bottom: -13px;
      width: 16px;
      height: 3px;
      background: #fcd535;
    }
  `}
`;

const CheckBox = styled.span`
  width: 16px;
  height: 16px;
  margin-right: 8px;
  border: 1px solid ${GRAY};
  border-radius: 3px;
`;

const HideLabel = styled.span`
  font-size: 12px;
  font-weight: 500;
`;

const OrdersCols = styled.div`
  display: flex;
  align-items: center;
  height: 32px;
  padding: 0 16px;
  font-size: 12px;
  color: ${GRAY};
`;

const OrdersCol = styled.div`
  flex: none;
  width: ${(p) => p.$width}px;
  display: flex;
  align-items: center;
  gap: 4px;
  padding-right: 16px;
  line-height: 19px;
`;

const ColText = styled.span`
  ${(p) => p.$dotted && `border-bottom: 1px dotted ${GRAY}; line-height: 15px;`}
`;

const SortBox = styled.span`
  display: flex;
  flex-direction: column;
  gap: 1px;
`;

const CancelAll = styled.span`
  width: 71px;
  line-height: 19px;
  color: #f0b90b;
`;

const ArrowOverlay = styled.svg`
  position: absolute;
  top: 0;
  left: 0;
  width: 1547px;
  height: 756px;
  pointer-events: none;
  stroke: #ee0000;
  fill: #ee0000;
  stroke-width: 3;
  stroke-linecap: round;
`;
